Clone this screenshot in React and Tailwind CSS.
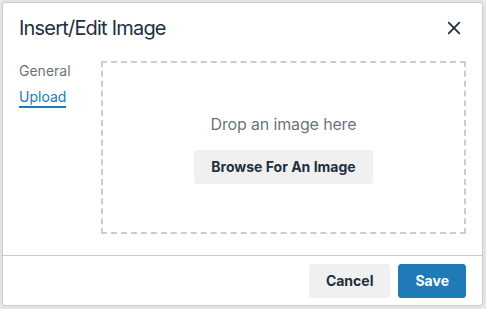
export default function App() {
  const font = { fontFamily: 'Inter, "Noto Sans", sans-serif' };
  return (
    <div className="w-[486px] h-[309px] bg-[#eeeeee] pt-[2px] pl-[2px]" style={font}>
      <div className="w-[481px] h-[304px] bg-white border border-[#cccccc] rounded-[3px] shadow-[0_0_12px_1px_rgba(34,47,62,0.12)] flex flex-col">
        <div className="h-[42px] pt-[11px] px-4 flex items-start justify-between">
          <div className="text-[20px] leading-[28px] tracking-[-0.8px] text-[#222f3e]">Insert/Edit Image</div>
          <button className="w-[28px] h-[28px] flex items-center justify-center mr-[-2px]">
            <svg width="14" height="14" viewBox="0 0 14 14">
              <path d="M1.7 1.7 L12.3 12.3 M12.3 1.7 L1.7 12.3" stroke="#222f3e" strokeWidth="1.8" strokeLinecap="round" />
            </svg>
          </button>
        </div>
        <div className="h-[210px] pt-4 px-4 flex">
          <div className="w-[82px] flex flex-col items-start text-[14px]">
            <div className="leading-[19px] text-[rgba(34,47,62,0.7)]">General</div>
            <div className="mt-[8px] leading-[18px] text-[#207ab7] border-b-2 border-[#207ab7]">Upload</div>
          </div>
          <div className="w-[365px] h-[173px] border-2 border-dashed border-[#cccccc] flex flex-col items-center justify-center">
            <div className="text-[16px] leading-[24px] tracking-[-0.15px] text-[rgba(34,47,62,0.7)]">Drop an image here</div>
            <button className="mt-[14px] h-[34px] px-4 bg-[#f0f0f0] border border-[#f0f0f0] rounded-[3px] text-[14px] font-bold text-[#222f3e] leading-[24px]">
              Browse For An Image
            </button>
          </div>
        </div>
        <div className="border-t border-[#cccccc] pt-[8px] px-4 flex justify-end gap-2">
          <button className="h-[34px] px-4 bg-[#f0f0f0] border border-[#f0f0f0] rounded-[3px] text-[14px] font-bold text-[#222f3e] leading-[24px]">
            Cancel
          </button>
          <button className="h-[34px] px-4 bg-[#207ab7] border border-[#207ab7] rounded-[3px] text-[14px] font-bold text-white leading-[24px]">
            Save
          </button>
        </div>
      </div>
    </div>
  );
}
